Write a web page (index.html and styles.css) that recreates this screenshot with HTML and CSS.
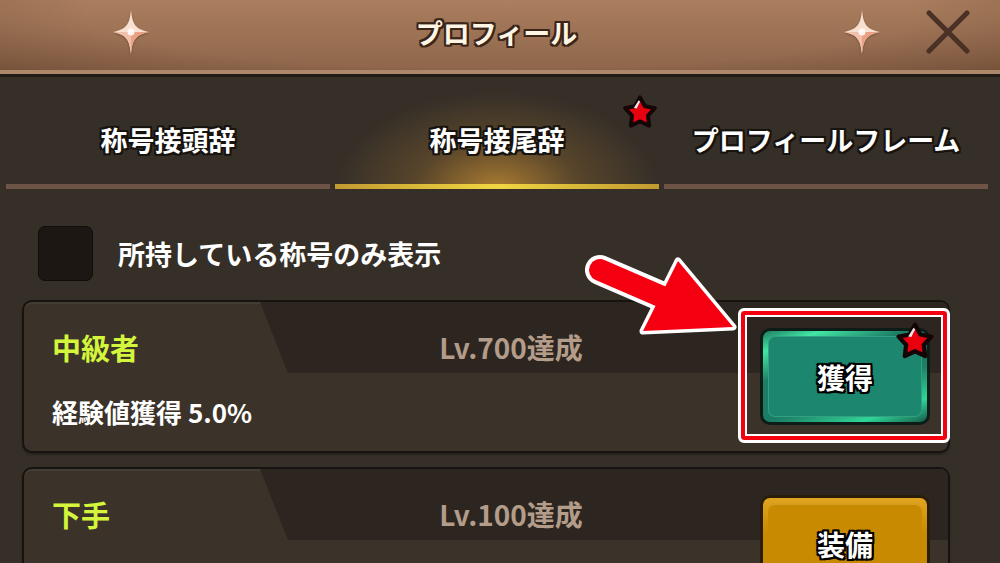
FILE: index.html
```html
<!DOCTYPE html>
<html lang="ja">
<head>
  <meta charset="UTF-8" />
  <meta name="viewport" content="width=device-width, initial-scale=1.0"/>
  <title>プロフィール</title>
  <link rel="stylesheet" href="styles.css">
</head>
<body>
  <header class="top-bar">
    <svg class="sparkle" viewBox="0 0 36 44" width="36" height="44">
      <path d="M18 0 C19.5 14 22 19 36 22 C22 25 19.5 30 18 44 C16.5 30 14 25 0 22 C14 19 16.5 14 18 0Z" fill="#f8dfcf"/>
      <path d="M18 22 L36 22 C22 25 19.5 30 18 44 Z" fill="#e9a084"/>
      <path d="M18 22 L0 22 C14 25 16.5 30 18 44 Z" fill="#f2c0aa"/>
      <circle cx="18" cy="22" r="3.5" fill="#fff" opacity="0.85"/>
    </svg>
    <h1 class="title">プロフィール</h1>
    <svg class="sparkle" viewBox="0 0 36 44" width="36" height="44">
      <path d="M18 0 C19.5 14 22 19 36 22 C22 25 19.5 30 18 44 C16.5 30 14 25 0 22 C14 19 16.5 14 18 0Z" fill="#f8dfcf"/>
      <path d="M18 22 L36 22 C22 25 19.5 30 18 44 Z" fill="#e9a084"/>
      <path d="M18 22 L0 22 C14 25 16.5 30 18 44 Z" fill="#f2c0aa"/>
      <circle cx="18" cy="22" r="3.5" fill="#fff" opacity="0.85"/>
    </svg>
    <button class="close-btn" aria-label="閉じる">
      <svg viewBox="0 0 44 44" width="44" height="44">
        <path d="M3 3 L41 41 M41 3 L3 41" stroke="#4a3126" stroke-width="5" stroke-linecap="round"/>
      </svg>
    </button>
  </header>

  <main class="panel">
    <nav class="tabs">
      <div class="tab">
        <span class="tab-label">称号接頭辞</span>
        <span class="tab-line"></span>
      </div>
      <div class="tab active">
        <span class="tab-label">称号接尾辞</span>
        <span class="tab-line"></span>
        <svg class="star tab-star" viewBox="0 0 34 34" width="38" height="38">
          <polygon points="17,3 21.41,10.93 30.31,12.67 24.13,19.32 25.23,28.33 17,24.5 8.77,28.33 9.87,19.32 3.69,12.67 12.59,10.93" fill="#e8000e" stroke="#140606" stroke-width="3.5" stroke-linejoin="round"/>
          <path d="M11.5 12.5 L15.8 5.5 L17.2 6.6 L14 13 Z" fill="#fff" opacity="0.9"/>
        </svg>
      </div>
      <div class="tab">
        <span class="tab-label">プロフィールフレーム</span>
        <span class="tab-line"></span>
      </div>
    </nav>

    <label class="filter">
      <span class="checkbox"></span>
      所持している称号のみ表示
    </label>

    <div class="title-list">
      <div class="title-card">
        <div class="card-info">
          <div class="name-row">
            <span class="title-name">中級者</span>
            <span class="title-cond">Lv.700達成</span>
          </div>
          <div class="card-bonus">経験値獲得 5.0%</div>
        </div>
        <div class="card-action">
          <button class="btn btn-get">
            <span class="btn-face">獲得</span>
            <svg class="star btn-star" viewBox="0 0 34 34" width="42" height="42">
              <polygon points="17,3 21.41,10.93 30.31,12.67 24.13,19.32 25.23,28.33 17,24.5 8.77,28.33 9.87,19.32 3.69,12.67 12.59,10.93" fill="#e8000e" stroke="#140606" stroke-width="3.5" stroke-linejoin="round"/>
              <path d="M11.5 12.5 L15.8 5.5 L17.2 6.6 L14 13 Z" fill="#fff" opacity="0.9"/>
            </svg>
          </button>
        </div>
        <div class="highlight"></div>
      </div>

      <div class="title-card">
        <div class="card-info">
          <div class="name-row">
            <span class="title-name">下手</span>
            <span class="title-cond">Lv.100達成</span>
          </div>
          <div class="card-bonus"></div>
        </div>
        <div class="card-action">
          <button class="btn btn-equip">
            <span class="btn-face">装備</span>
          </button>
        </div>
      </div>
    </div>
  </main>

  <svg class="pointer-arrow" viewBox="0 0 160 95" width="160" height="95">
    <g fill="#fff" stroke="#fff" stroke-linejoin="round" stroke-linecap="round">
      <line x1="15" y1="20" x2="80" y2="48" stroke-width="30"/>
      <polygon points="93,11 148,77 58,81" stroke-width="7"/>
    </g>
    <g fill="#f50010" stroke="#f50010" stroke-linecap="round">
      <line x1="15" y1="20" x2="82" y2="49" stroke-width="22"/>
      <polygon points="93,11 148,77 58,81" stroke-width="0"/>
    </g>
  </svg>
</body>
</html>
```

FILE: styles.css
```css
* { margin: 0; padding: 0; box-sizing: border-box; font-family: 'Noto Sans CJK JP', 'Noto Sans', sans-serif; }
body { width: 1000px; height: 563px; overflow: hidden; background-color: #352f28; color: #fff; position: relative; }

/* header */
.top-bar {
  height: 74px;
  display: grid;
  grid-template-columns: 36px 1fr 36px 120px;
  align-items: center;
  padding-left: 113px;
  padding-bottom: 6px;
  background:
    radial-gradient(ellipse 75% 140% at 50% 20%, rgba(0,0,0,0) 55%, rgba(50,25,12,0.35) 100%),
    linear-gradient(to bottom, #aa7e5e, #8f664b);
  border-bottom: 4px solid #ad876a;
  box-shadow: 0 3px 0 #221c17;
  position: relative;
  z-index: 1;
}

.sparkle { filter: drop-shadow(0 1px 1px rgba(60,30,15,0.4)); }

.title {
  text-align: center;
  font-size: 27px;
  font-weight: 700;
  color: #fff5e4;
  text-shadow: 2px 0 #3a2518, -2px 0 #3a2518, 0 2px #3a2518, 0 -2px #3a2518,
    2px 2px #3a2518, -2px 2px #3a2518, 2px -2px #3a2518, -2px -2px #3a2518;
}

.close-btn {
  justify-self: end;
  margin-right: 30px;
  width: 44px;
  height: 44px;
  background: none;
  border: none;
  display: flex;
}

/* tabs */
.tabs {
  display: flex;
  gap: 5px;
  padding: 0 12px 0 6px;
  height: 115px;
}

.tab {
  flex: 1;
  display: flex;
  flex-direction: column;
  justify-content: flex-end;
  align-items: center;
  position: relative;
}

.tab-label {
  font-size: 27px;
  font-weight: 700;
  line-height: 40px;
  margin-bottom: 24px;
  color: #fff;
  text-shadow: 2px 0 #17130f, -2px 0 #17130f, 0 2px #17130f, 0 -2px #17130f,
    2px 2px #17130f, -2px 2px #17130f, 2px -2px #17130f, -2px -2px #17130f;
}

.tab-line {
  align-self: stretch;
  height: 5px;
  background-color: #6e5446;
}

.tab.active {
  background: radial-gradient(ellipse 50% 85% at 50% 100%, rgba(210,150,52,0.75) 0%, rgba(170,120,48,0.3) 50%, rgba(53,47,40,0) 100%);
}

.tab.active .tab-line {
  background: linear-gradient(to right, #c19a30, #f2d640 50%, #c19a30);
}

.tab-star { position: absolute; left: 286px; top: 20px; }

/* filter */
.filter {
  display: flex;
  align-items: center;
  gap: 25px;
  margin-top: 37px;
  padding-left: 38px;
  height: 55px;
  font-size: 27px;
  font-weight: 600;
}

.checkbox {
  width: 55px;
  height: 55px;
  border-radius: 7px;
  background-color: #1c1712;
  border: 1px solid #100c09;
}

/* title cards */
.title-list {
  display: flex;
  flex-direction: column;
  gap: 14px;
  margin-top: 19px;
  padding: 0 50px 0 22px;
}

.title-card {
  position: relative;
  display: flex;
  height: 153px;
  flex-shrink: 0;
  background-color: #3b3229;
  border: 2px solid #171310;
  border-radius: 10px;
  box-shadow: inset 0 2px 0 rgba(255,255,255,0.05), 0 2px 2px rgba(0,0,0,0.3);
}

.title-card::before {
  content: "";
  position: absolute;
  top: 0;
  left: 236px;
  right: 0;
  height: 71px;
  border-top-right-radius: 8px;
  background-color: #2d2620;
  clip-path: polygon(0 0, 100% 0, 100% 100%, 28px 100%);
}

.card-info {
  position: relative;
  flex: 0 0 736px;
  padding-left: 28px;
}

.name-row {
  display: grid;
  grid-template-columns: 210px 1fr;
  align-items: center;
  margin-top: 26px;
  line-height: 38px;
}

.title-name {
  color: #d3f53b;
  font-size: 29px;
  font-weight: 700;
}

.title-cond {
  text-align: center;
  color: #b39c8a;
  font-size: 28px;
  font-weight: 700;
}

.card-bonus {
  margin-top: 28px;
  font-size: 26px;
  font-weight: 600;
  line-height: 36px;
}

.card-action {
  position: relative;
  flex: 1;
  display: flex;
  align-items: center;
}

.btn {
  position: relative;
  display: flex;
  width: 170px;
  height: 97px;
  padding: 5px;
  border-radius: 10px;
  border: 3px solid #0e1c18;
}

.btn-face {
  flex: 1;
  display: flex;
  align-items: center;
  justify-content: center;
  border-radius: 7px;
  font-size: 28px;
  font-weight: 700;
  color: #fff;
  text-shadow: 2px 0 #000, -2px 0 #000, 0 2px #000, 0 -2px #000,
    2px 2px #000, -2px 2px #000, 2px -2px #000, -2px -2px #000;
}

.btn-get {
  background: linear-gradient(160deg, #1d7c63 0%, #43e6a4 14%, #1c7e65 34%, #1c7e65 62%, #2fd596 84%, #155d4b 100%);
}

.btn-get .btn-face {
  background-color: #1c866e;
  box-shadow: inset 0 0 0 1px rgba(120,240,190,0.25);
}

.btn-equip {
  border-color: #2a1e0a;
  background: linear-gradient(to bottom, #e0a420, #c78a00 40%);
}

.btn-equip .btn-face {
  background-color: #c88a00;
  box-shadow: inset 0 2px 0 rgba(255,220,120,0.25);
}

.btn-star { position: absolute; right: -9px; top: -10px; }

.highlight {
  position: absolute;
  left: 714px;
  top: 6px;
  width: 212px;
  height: 135px;
  border: 3px solid #fff;
  border-radius: 6px;
  box-shadow: inset 0 0 0 4px #f50010, inset 0 0 0 6px #fff;
}

.pointer-arrow {
  position: absolute;
  left: 585px;
  top: 250px;
}
```
